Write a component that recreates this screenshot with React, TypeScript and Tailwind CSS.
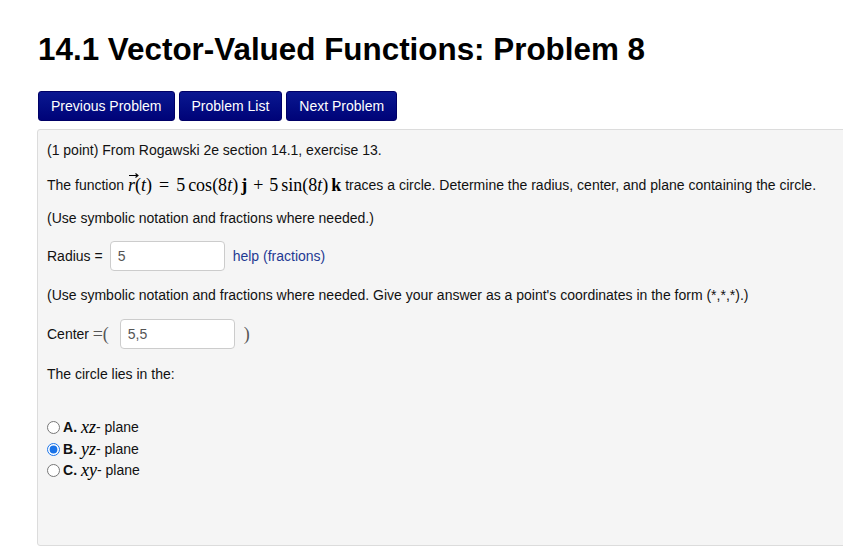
import React from "react";

const sans = { fontFamily: '"Liberation Sans", Arial, sans-serif' };

function Vec({ ch }: { ch: string }) {
  // r with a little arrow sitting on top
  return (
    <span className="relative inline-block italic">
      {ch}
      <svg className="absolute left-[1px] top-[1px]" width="10" height="5" viewBox="0 0 10 5">
        <path d="M0 2.5 H9 M6.5 0.5 L9 2.5 L6.5 4.5" stroke="#000" strokeWidth="1.1" fill="none" />
      </svg>
    </span>
  );
}

function Math({ children }: { children: React.ReactNode }) {
  return (
    <span className="text-[18px] text-black" style={{ fontFamily: '"Liberation Serif", "DejaVu Serif", serif' }}>
      {children}
    </span>
  );
}

function NavButton({ label }: { label: string }) {
  return (
    <button className="h-[30px] rounded-[3px] border border-[#000066] bg-gradient-to-b from-[#0b1791] to-[#000378] px-[12px] text-[14px] text-white">
      {label}
    </button>
  );
}

function Choice({ letter, v, checked }: { letter: string; v: string; checked?: boolean }) {
  return (
    <label className="flex h-[21.5px] items-center">
      <input type="radio" name="plane" defaultChecked={checked} className="m-0 mr-[3px] h-[13px] w-[13px] accent-[#1a73e8]" />
      <b className="mr-[4px]">{letter}.</b>
      <Math>
        <i>{v}</i>
      </Math>
      <span>- plane</span>
    </label>
  );
}

export default function App() {
  return (
    <div className="h-[554px] w-[843px] overflow-hidden bg-white text-[14px] text-[#111]" style={sans}>
      <div className="pl-[38px] pt-[30px]">
        <h1 className="text-[31.4px] font-bold leading-[40px] text-black">
          14.1 Vector-Valued Functions: Problem 8
        </h1>

        <div className="mt-[21px] flex gap-[4px]">
          <NavButton label="Previous Problem" />
          <NavButton label="Problem List" />
          <NavButton label="Next Problem" />
        </div>
      </div>

      <div className="ml-[37px] mt-[8px] h-[417px] w-[830px] rounded-[3px] border border-[#dcdcdc] bg-[#f5f5f5] px-[9px] pt-[11px]">
        <p className="leading-[18px]">(1 point) From Rogawski 2e section 14.1, exercise 13.</p>

        <p className="mt-[16px] flex h-[20px] items-center">
          <span>The function&nbsp;</span>
          <Math>
            <Vec ch="r" />(<i>t</i>)<span className="mx-[7px]">=</span>5<span className="ml-[3px]">cos</span>(8<i>t</i>)
            <b className="ml-[3px]">j</b>
            <span className="mx-[6px]">+</span>5<span className="ml-[3px]">sin</span>(8<i>t</i>)
            <b className="ml-[3px]">k</b>
          </Math>
          <span>&nbsp;traces a circle. Determine the radius, center, and plane containing the circle.</span>
        </p>

        <p className="mt-[14px] leading-[18px]">(Use symbolic notation and fractions where needed.)</p>

        <div className="mt-[14px] flex items-center">
          <span>Radius =</span>
          <input
            defaultValue="5"
            className="ml-[7px] h-[30px] w-[115px] rounded-[4px] border border-[#cccccc] bg-white px-[7px] text-[14px] text-[#555] outline-none"
          />
          <span className="ml-[8px] text-[#1f3a93]">help (fractions)</span>
        </div>

        <p className="mt-[15px] leading-[18px]">
          (Use symbolic notation and fractions where needed. Give your answer as a point's coordinates in the form (*,*,*).)
        </p>

        <div className="mt-[15px] flex items-center">
          <span>Center</span>
          <Math>
            <span className="text-[#555]">&thinsp;=(</span>
          </Math>
          <input
            defaultValue="5,5"
            className="ml-[11px] h-[30px] w-[115px] rounded-[4px] border border-[#cccccc] bg-white px-[7px] text-[14px] text-[#555] outline-none"
          />
          <Math>
            <span className="ml-[9px] text-[#555]">)</span>
          </Math>
        </div>

        <p className="mt-[16px] leading-[18px]">The circle lies in the:</p>

        <div className="mt-[34px] flex flex-col">
          <Choice letter="A" v="xz" />
          <Choice letter="B" v="yz" checked />
          <Choice letter="C" v="xy" />
        </div>
      </div>
    </div>
  );
}
